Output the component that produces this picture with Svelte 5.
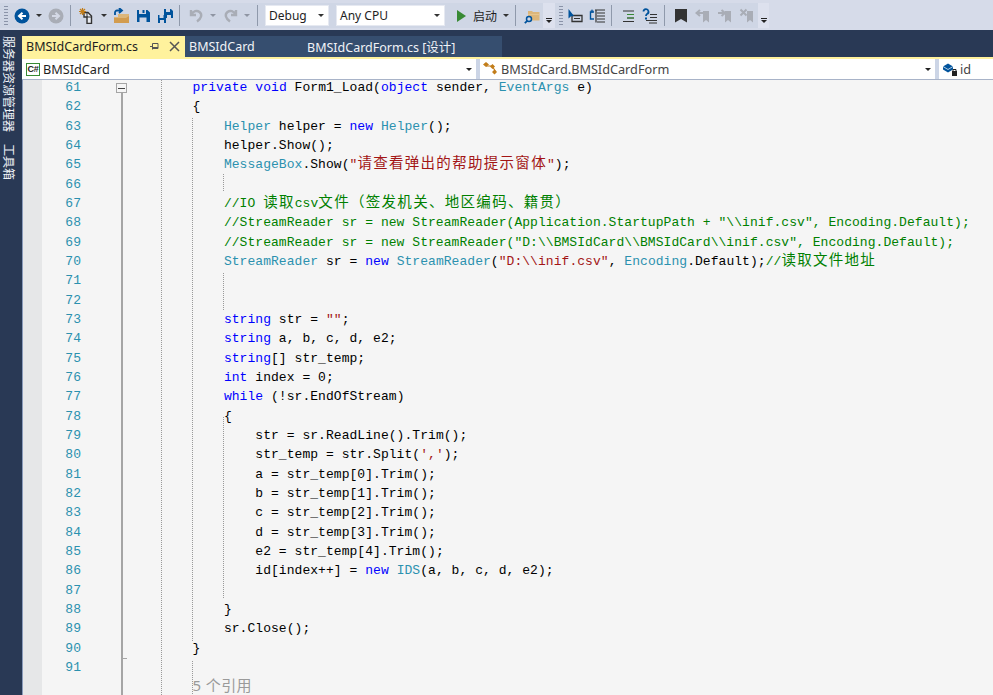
<script>
  const T = 't', K = 'k', S = 's', C = 'c', P = 'p';
  const rows = [
    [61, 0, [[K,'private'],[P,' '],[K,'void'],[P,' Form1_Load('],[K,'object'],[P,' sender, '],[T,'EventArgs'],[P,' e)']]],
    [62, 0, [[P,'{']]],
    [63, 4, [[T,'Helper'],[P,' helper = '],[K,'new'],[P,' '],[T,'Helper'],[P,'();']]],
    [64, 4, [[P,'helper.Show();']]],
    [65, 4, [[T,'MessageBox'],[P,'.Show('],[S,'"请查看弹出的帮助提示窗体"'],[P,');']]],
    [66, 0, []],
    [67, 4, [[C,'//IO 读取csv文件（签发机关、地区编码、籍贯）']]],
    [68, 4, [[C,'//StreamReader sr = new StreamReader(Application.StartupPath + "\\\\inif.csv", Encoding.Default);']]],
    [69, 4, [[C,'//StreamReader sr = new StreamReader("D:\\\\BMSIdCard\\\\BMSIdCard\\\\inif.csv", Encoding.Default);']]],
    [70, 4, [[T,'StreamReader'],[P,' sr = '],[K,'new'],[P,' '],[T,'StreamReader'],[P,'('],[S,'"D:\\\\inif.csv"'],[P,', '],[T,'Encoding'],[P,'.Default);'],[C,'//读取文件地址']]],
    [71, 0, []],
    [72, 0, []],
    [73, 4, [[K,'string'],[P,' str = '],[S,'""'],[P,';']]],
    [74, 4, [[K,'string'],[P,' a, b, c, d, e2;']]],
    [75, 4, [[K,'string'],[P,'[] str_temp;']]],
    [76, 4, [[K,'int'],[P,' index = 0;']]],
    [77, 4, [[K,'while'],[P,' (!sr.EndOfStream)']]],
    [78, 4, [[P,'{']]],
    [79, 8, [[P,'str = sr.ReadLine().Trim();']]],
    [80, 8, [[P,'str_temp = str.Split('],[S,"','"],[P,');']]],
    [81, 8, [[P,'a = str_temp[0].Trim();']]],
    [82, 8, [[P,'b = str_temp[1].Trim();']]],
    [83, 8, [[P,'c = str_temp[2].Trim();']]],
    [84, 8, [[P,'d = str_temp[3].Trim();']]],
    [85, 8, [[P,'e2 = str_temp[4].Trim();']]],
    [86, 8, [[P,'id[index++] = '],[K,'new'],[P,' '],[T,'IDS'],[P,'(a, b, c, d, e2);']]],
    [87, 0, []],
    [88, 4, [[P,'}']]],
    [89, 4, [[P,'sr.Close();']]],
    [90, 0, [[P,'}']]],
    [91, 0, []]
  ];

  // Split a string into Latin and CJK runs: CJK cells are two code columns wide.
  function runs(text) {
    return text.split(/([\u3000-\u30ff\u4e00-\u9fff\uff00-\uffef]+)/).filter(Boolean).map((t) => ({
      t,
      wide: /[\u3000-\u30ff\u4e00-\u9fff\uff00-\uffef]/.test(t)
    }));
  }

  const guides = [
    { x: 139, top: 0, h: 616 },
    { x: 170, top: 38, h: 523 },
    { x: 170, top: 581, h: 35 },
    { x: 201, top: 94, h: 18 },
    { x: 201, top: 193, h: 38 },
    { x: 201, top: 337, h: 182 }
  ];
</script>

<div class="ide">
  <header class="tray">
    <div class="group">
      <i class="grip"></i>
      <span class="btn"><svg width="16" height="16" viewBox="0 0 16 16"><circle cx="8" cy="8" r="7.5" fill="#00539c"/><path d="M12 8H6M8.5 4.8 5 8l3.5 3.2" fill="none" stroke="#fff" stroke-width="2"/></svg></span>
      <span class="arr"><b></b></span>
      <span class="btn"><svg width="16" height="16" viewBox="0 0 16 16"><circle cx="8" cy="8" r="7.5" fill="#a9adb6"/><path d="M4 8h6M7.5 4.8 11 8l-3.5 3.2" fill="none" stroke="#d4d9e6" stroke-width="2"/></svg></span>
      <i class="sep"></i>
      <span class="btn"><svg width="16" height="16" viewBox="0 0 16 16"><path d="M5 4.5h4l3.5 3.5v7.5H8V9H5z" fill="#e8ebf2" stroke="#333" stroke-width="1.4"/><path d="M8 4.5v4.5h4" fill="none" stroke="#333"/><path d="M3.5 0v7M0 3.5h7M1 1l5 5M6 1 1 6" stroke="#c27d1a" stroke-width="1.2"/></svg></span>
      <span class="arr"><b></b></span>
      <span class="btn"><svg width="16" height="16" viewBox="0 0 16 16"><path d="M5 6h11v9H1V9h4z" fill="#dcb67a"/><path d="M1 10h12l3-2v7H1z" fill="#d29c4f"/><path d="M2 7V4.5A2 2 0 0 1 4 2.5h4M6 0l3 2.500-3 2.500" fill="none" stroke="#00539c" stroke-width="1.8"/></svg></span>
      <span class="btn"><svg width="14" height="14" viewBox="0 0 14 14"><path d="M1 1h2v4h7V1h1.500L14 3.500V13H1z" fill="#00539c"/><path d="M6.500 1h2v3h-2z" fill="#00539c"/><path d="M3.500 8.500h7V13h-7z" fill="#cfd6e5"/></svg></span>
      <span class="btn"><svg width="16" height="16" viewBox="0 0 16 16"><path d="M7 1h2v3h4V1h1l2 2v7H8V7H7z" fill="#00539c"/><path d="M1 7h1.500v3h4V7H8l1 1v7H1z" fill="#00539c"/><path d="M3 12h4v3H3zM10 7h4v3h-4z" fill="#cfd6e5"/></svg></span>
      <i class="sep"></i>
      <span class="btn"><svg width="15" height="15" viewBox="0 0 15 15"><path d="M2 2v5h5M2.500 6.500C4 3 8 2 10.500 4c3 2.300 2 6.500-2.500 9.500" fill="none" stroke="#a9adb6" stroke-width="2.400"/></svg></span>
      <span class="arr"><b class="dim"></b></span>
      <span class="btn"><svg width="15" height="15" viewBox="0 0 15 15"><path d="M13 2v5H8M12.500 6.500C11 3 7 2 4.500 4c-3 2.300-2 6.500 2.500 9.500" fill="none" stroke="#a9adb6" stroke-width="2.400"/></svg></span>
      <span class="arr"><b class="dim"></b></span>
      <i class="sep wide"></i>
      <span class="combo debug">Debug<b></b></span>
      <span class="combo cpu">Any CPU<b></b></span>
      <span class="btn play"><svg width="12" height="14" viewBox="0 0 12 14"><path d="M2 1l9 6-9 6z" fill="#388a34"/></svg></span>
      <span class="start">启动</span>
      <span class="arr"><b></b></span>
      <i class="sep"></i>
      <span class="btn"><svg width="16" height="16" viewBox="0 0 16 16"><path d="M4 3l4-.1 1 1.100h6.500v8.500H4z" fill="#dcb67a"/><path d="M4 6.500h11.500" stroke="#e6c58e"/><circle cx="5" cy="11" r="2.500" fill="#cfd6e5" stroke="#00539c" stroke-width="1.500"/><path d="M3.200 12.800.8 15.200" stroke="#00539c" stroke-width="1.800"/></svg></span>
    </div>
    <span class="over"><u></u><b></b></span>
    <div class="group">
      <i class="grip second"></i>
      <span class="btn"><svg width="16" height="16" viewBox="0 0 16 16"><path d="M5 7.500h10v6H5z" fill="none" stroke="#333" stroke-width="1.300"/><path d="M7 10.500h6" stroke="#333"/><path d="M1.500 1v9.500l2.500-2.300 3-.2z" fill="#00539c"/></svg></span>
      <span class="btn"><svg width="16" height="16" viewBox="0 0 16 16"><path d="M6 2h10M8 5h8M8 8h8M8 11h8M8 14h8M7 2v12.500" stroke="#333" stroke-width="1.200" fill="none"/><path d="M5 4H1.500v7H5" fill="none" stroke="#00539c" stroke-width="1.400"/><path d="M3 1.500v3.500M1.500 3h3" stroke="#00539c"/></svg></span>
      <i class="sep"></i>
      <span class="btn"><svg width="16" height="16" viewBox="0 0 16 16"><path d="M3 3h11M7 6.500h7M7 10h7M3 13.500h11" stroke="#333" stroke-width="1.200"/><path d="M7 6.500h7M7 10h7" stroke="#388a34" stroke-width="1.200"/></svg></span>
      <span class="btn"><svg width="16" height="16" viewBox="0 0 16 16"><path d="M8 6.500h7M8 9.500h7M4 12.500h11M7 15h8" stroke="#333" stroke-width="1.200"/><path d="M1.500 3.500A2.500 2.500 0 1 1 5 6C4 6.600 4 7 4 8" fill="none" stroke="#00539c" stroke-width="1.800"/><path d="M3 9.500h2v2H3z" fill="#00539c"/></svg></span>
      <i class="sep"></i>
      <span class="btn"><svg width="14" height="15" viewBox="0 0 14 15"><path d="M1 1h12v13.500L7 11l-6 3.500z" fill="#333"/></svg></span>
      <span class="btn"><svg width="16" height="15" viewBox="0 0 16 15"><path d="M8 3h6v11.500L11 12l-3 2.500z" fill="#a9adb6"/><path d="M8 5H2M5 2 1.500 5 5 8" fill="none" stroke="#a9adb6" stroke-width="2"/></svg></span>
      <span class="btn"><svg width="16" height="15" viewBox="0 0 16 15"><path d="M8 3h6v11.500L11 12l-3 2.500z" fill="#a9adb6"/><path d="M1 5h6M4.500 2 8 5 4.500 8" fill="none" stroke="#a9adb6" stroke-width="2"/></svg></span>
      <span class="btn"><svg width="16" height="15" viewBox="0 0 16 15"><path d="M8 3h6v11.500L11 12l-3 2.500z" fill="#a9adb6"/><path d="M1.500 1.500l6 6M7.500 1.500l-6 6" stroke="#a9adb6" stroke-width="2"/></svg></span>
    </div>
    <span class="over end"><u></u><b></b></span>
  </header>

  <div class="body">
    <aside class="rail">
      <span>服务器资源管理器</span>
      <span>工具箱</span>
    </aside>

    <main class="doc">
      <nav class="tabs">
        <div class="tab active">
          <span class="name">BMSIdCardForm.cs</span>
          <svg class="pin" width="9" height="9" viewBox="0 0 9 9"><path d="M2.500 4.500H0M2.500 1.500v6M2.500 1.500H8v5H2.500M2.500 5.500H8" fill="none" stroke="#555"/></svg>
          <svg class="close" width="11" height="11" viewBox="0 0 11 11"><path d="M1 1l9 9M10 1l-9 9" stroke="#555" stroke-width="1.500"/></svg>
        </div>
        <div class="rest">
          <span class="second-tab">BMSIdCard</span>
          <span class="third-tab">BMSIdCardForm.cs [设计]</span>
        </div>
      </nav>

      <div class="navbar">
        <div class="nav n1">
          <svg width="14" height="13" viewBox="0 0 14 13"><rect x=".5" y=".5" width="13" height="12" fill="#fff" stroke="#388a34"/></svg>
          <span class="cs">C#</span>
          <span>BMSIdCard</span>
          <b></b>
        </div>
        <div class="nav n2">
          <svg width="16" height="14" viewBox="0 0 16 14"><path d="M3 4h6l4 6" fill="none" stroke="#c27d1a" stroke-width="1.200"/><path d="M0 2.500 3 0l3 2.500L3 5zM7 4.500 9.500 2 12 4.500 9.500 7zM9 10l2.500-2.500L14 10l-2.500 2.500z" fill="#c27d1a"/></svg>
          <span class="muted">BMSIdCard.BMSIdCardForm</span>
          <b></b>
        </div>
        <div class="nav n3">
          <svg width="17" height="15" viewBox="0 0 17 15"><path d="M1 4.500 6 1.500l5 3v3l-5 3-5-3z" fill="#00539c"/><path d="M1 4.500l5 3 5-3" fill="none" stroke="#fff" stroke-width=".7"/><path d="M10 9h5v5h-5z" fill="#222"/><path d="M11 9V7.500h3V9" fill="none" stroke="#222"/></svg>
          <span class="muted">id</span>
        </div>
      </div>

      <section class="editor">
        <div class="gutter"></div>
        <div class="lines">
          {#each rows as [num, indent, segs]}
            <div class="row">
              <span class="num">{num}</span>
              <code class="code indent-{indent}">{#each segs as [cls, text]}<span class={cls}>{#each runs(text) as run}{#if run.wide}<span class="wide">{run.t}</span>{:else}{run.t}{/if}{/each}</span>{/each}</code>
            </div>
          {/each}
          <div class="row">
            <span class="num"></span>
            <span class="lens">5 个引用</span>
          </div>
        </div>
        <div class="fold-box"><i></i></div>
        <div class="fold-line"></div>
        <div class="fold-end"></div>
        {#each guides as g}
          <i class="guide" style="left:{g.x}px;top:{g.top}px;height:{g.h}px"></i>
        {/each}
      </section>
    </main>
  </div>
</div>

<style>
  :global(body) { margin: 0; background: #d6dbe9; }
  .ide { width: 993px; height: 695px; display: flex; flex-direction: column; overflow: hidden; font-family: "Noto Sans", "Noto Sans CJK SC", sans-serif; }

  .tray { height: 30px; flex: none; display: flex; align-items: stretch; padding-top: 3px; box-sizing: border-box; background: #d6dbe9; padding-bottom: 2px; }
  .group { display: flex; align-items: center; background: #cfd6e5; }
  .grip { width: 4px; height: 21px; margin: 0 3px 0 4px; background-image: radial-gradient(#8a93a8 .7px, transparent .8px); background-size: 2px 3px; }
  .grip.second { margin-right: 1px; }
  .btn { width: 22px; height: 22px; flex: none; display: flex; align-items: center; justify-content: center; }
  .arr { width: 12px; height: 22px; flex: none; display: flex; align-items: center; justify-content: center; }
  .arr b, .combo b, .over b, .nav b { width: 0; height: 0; border: 3px solid transparent; border-top: 3px solid #333; border-bottom: 0; display: block; }
  .arr b { border-left-width: 3.500px; border-right-width: 3.500px; }
  .arr b.dim { border-top-color: #8f95a3; }
  .sep { width: 1px; height: 21px; background: #8f99ab; margin: 0 5px 0 3px; flex: none; }
  .sep.wide { margin: 0 7px 0 4px; }
  .combo { height: 21px; box-sizing: border-box; background: #fff; border: 1px solid #e6e9f1; display: flex; align-items: center; justify-content: space-between; padding: 0 4px 0 3px; font-size: 12px; color: #1e1e1e; margin-right: 7px; flex: none; }
  .combo.debug { width: 64px; }
  .combo.cpu { width: 109px; margin-right: 5px; }
  .play { margin-right: 1px; }
  .start { font-size: 12px; color: #1e1e1e; width: 27px; }
  .over { width: 12px; flex: none; display: flex; flex-direction: column; align-items: center; justify-content: flex-end; background: #dde1ee; padding-bottom: 5px; gap: 1px; }
  .over u { width: 6px; height: 1px; background: #222; display: block; }
  .over b { border-top-color: #222; }
  .over.end { width: 11px; }

  .body { flex: 1; display: flex; background: #293955; min-height: 0; }
  .rail { width: 22px; flex: none; writing-mode: vertical-rl; text-orientation: sideways; display: flex; flex-direction: row; gap: 12px; padding: 6px 7px 0 0; box-sizing: border-box; font-size: 12px; line-height: 14px; color: #eef1f7; }

  .doc { flex: 1; min-width: 0; display: flex; flex-direction: column; }
  .tabs { height: 27px; flex: none; padding-top: 6px; box-sizing: border-box; display: flex; }
  .tab { height: 21px; display: flex; align-items: center; font-size: 12.500px; }
  .tab.active { width: 163px; background: #fff29d; color: #1e1e1e; box-sizing: border-box; padding-left: 4px; position: relative; }
  .pin { margin-left: 12px; }
  .close { margin-left: 10px; }
  .rest { width: 317px; height: 21px; background: #364e6f; color: #f1f3f7; font-size: 12.500px; display: flex; align-items: center; padding-left: 4px; box-sizing: border-box; }
  .second-tab { width: 118px; }

  .navbar { height: 23px; flex: none; box-sizing: border-box; border-top: 2px solid #fff29d; border-bottom: 1px solid #a8b3c8; display: flex; gap: 4px; background: #ccd5e6; }
  .nav { height: 20px; background: #fff; display: flex; align-items: center; font-size: 12.700px; color: #1e1e1e; box-sizing: border-box; position: relative; }
  .nav b { border-top-color: #222; position: absolute; right: 4px; top: 9px; }
  .n1 { width: 454px; padding-left: 4px; gap: 3px; }
  .n2 { width: 455px; padding-left: 3px; gap: 2px; }
  .n3 { flex: 1; padding-left: 3px; gap: 1px; }
  .cs { position: absolute; left: 4px; top: 3px; font: bold 9px/14px "Liberation Sans", sans-serif; width: 14px; text-align: center; letter-spacing: -.3px; color: #222; }
  .muted { color: #444; }

  .editor { flex: 1; position: relative; background: #f5f5f5; overflow: hidden; min-height: 0; }
  .gutter { position: absolute; left: 0; top: 0; bottom: 0; width: 20px; background: #e6e7e8; border-left: 1px solid #8a9bba; box-sizing: border-box; }
  .lines { position: relative; margin-top: -2px; }
  .row { height: 19.330px; line-height: 19.330px; display: flex; white-space: pre; font-family: "Liberation Mono", "Noto Sans CJK SC", monospace; font-size: 13px; letter-spacing: .05px; color: #000; }
  .num { width: 59px; flex: none; text-align: right; color: #2b91af; }
  .code { display: block; margin-left: 111.500px; font: inherit; }
  .indent-4 { padding-left: 31.400px; }
  .indent-8 { padding-left: 62.800px; }
  .t { color: #2b91af; }
  .k { color: #0000ff; }
  .s { color: #a31515; }
  .c { color: #008000; }
  .wide { font-family: "Noto Sans CJK SC", sans-serif; font-size: 14.500px; letter-spacing: 1.300px; line-height: 1; }
  .lens { margin-left: 111.500px; font-family: "Noto Sans", "Noto Sans CJK SC", sans-serif; font-size: 15px; line-height: 17px; letter-spacing: .4px; color: #9a9a9a; }

  .fold-box { position: absolute; left: 94px; top: 3px; width: 11px; height: 10px; box-sizing: border-box; border: 1px solid #a5a5a5; background: #f5f5f5; display: flex; align-items: center; justify-content: center; }
  .fold-box i { width: 7px; height: 1px; background: #444; }
  .fold-line { position: absolute; left: 99px; top: 13px; bottom: 0; width: 2px; background: #a5a5a5; }
  .fold-end { position: absolute; left: 99px; top: 578px; width: 6px; height: 1px; background: #a5a5a5; }
  .guide { position: absolute; width: 1px; background: repeating-linear-gradient(to bottom, #999 0 1px, transparent 1px 2px); }
</style>
